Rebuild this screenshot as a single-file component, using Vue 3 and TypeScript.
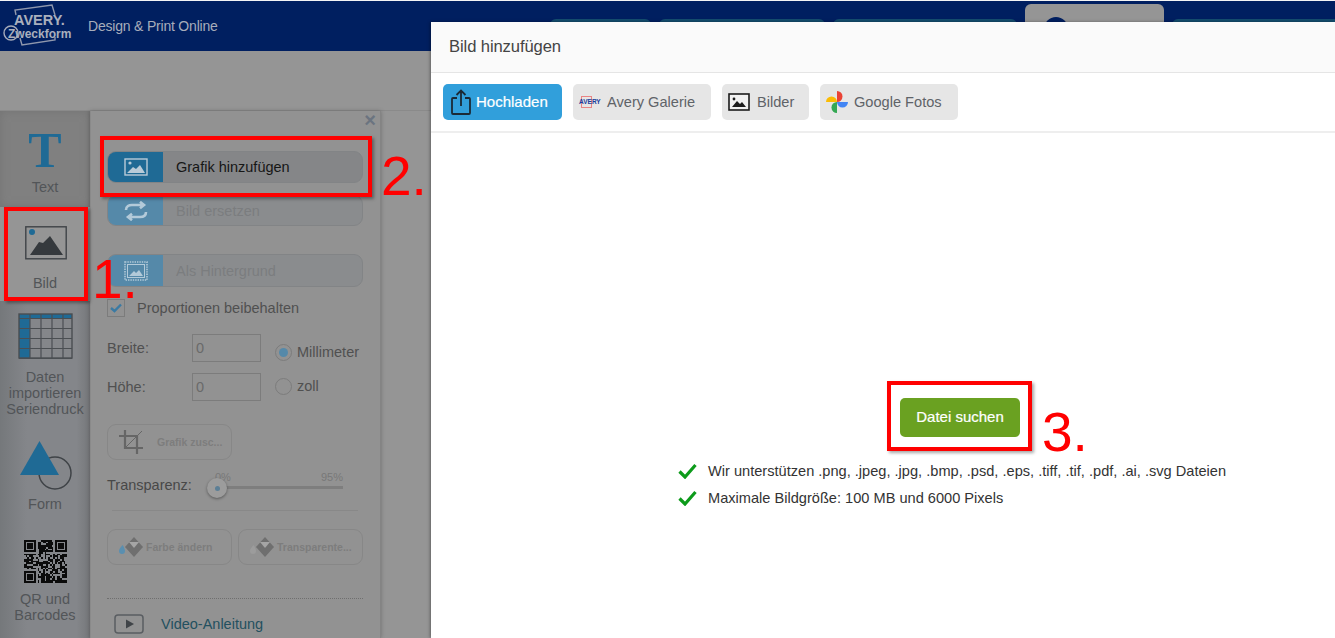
<script setup lang="ts">
const size = 25
const qr: { x: number; y: number }[] = []
function finder(x0: number, y0: number, x: number, y: number): number {
  const dx = x - x0
  const dy = y - y0
  if (dx < -1 || dy < -1 || dx > 7 || dy > 7) return -1
  if (dx < 0 || dy < 0 || dx > 6 || dy > 6) return 0
  if (dx === 0 || dy === 0 || dx === 6 || dy === 6) return 1
  if (dx === 1 || dy === 1 || dx === 5 || dy === 5) return 0
  return 1
}
let seed = 77
for (let y = 0; y < size; y++) {
  for (let x = 0; x < size; x++) {
    seed = (seed * 1103 + 12345) % 65536
    const f = Math.max(finder(0, 0, x, y), finder(size - 7, 0, x, y), finder(0, size - 7, x, y))
    if (f === 1 || (f === -1 && (seed >> 6) % 5 < 3)) qr.push({ x, y })
  }
}
const rows = [0, 1, 2, 3, 4]
const cols = [1, 2, 3, 4]
</script>

<template>
  <div class="page">
    <header class="topbar">
      <div class="logo">
        <svg class="logo-frame" width="76" height="50" viewBox="0 0 76 50">
          <path d="M16 15 L15 10 L52 5 L55 15 M20 38 L22 45 L55 40 L55 37" fill="none" stroke="#8f98ad" stroke-width="1.4" />
          <circle cx="11" cy="33" r="7" fill="none" stroke="#a6acba" stroke-width="1.4" />
        </svg>
        <span class="logo-avery">AVERY.</span>
        <span class="logo-zweck">Zweckform</span>
      </div>
      <span class="brand-text">Design &amp; Print Online</span>
      <nav class="top-tabs">
        <span class="tab t1"></span>
        <span class="tab t2"></span>
        <span class="tab t3"></span>
        <span class="tab active"><i class="user-dot"></i></span>
        <span class="tab t5"></span>
      </nav>
    </header>
    <div class="toolbar"></div>
    <div class="workspace">
      <aside class="sidebar">
        <div class="side-item first">
          <span class="t-glyph">T</span>
          <span class="side-label">Text</span>
        </div>
        <div class="side-item selected">
          <svg width="42" height="34" viewBox="0 0 42 34">
            <rect x="0.8" y="0.8" width="40.4" height="32" fill="none" stroke="#3f4347" stroke-width="1.4" />
            <circle cx="7" cy="6" r="3" fill="#1f6a95" />
            <path d="M5 29 L14 16 L18 17 L25 10 L38 29 Z" fill="#35393d" />
          </svg>
          <span class="side-label">Bild</span>
        </div>
        <div class="side-item table">
          <svg width="55" height="46" viewBox="0 0 55 46">
            <rect x="1" y="1" width="53" height="5" fill="#1f6a95" />
            <rect x="1" y="6" width="11" height="39" fill="#1f6a95" />
            <rect x="1" y="1" width="53" height="44" fill="none" stroke="#4a4e52" stroke-width="1.4" />
            <path v-for="c in cols" :key="'c' + c" :d="`M${1 + c * 11} 1 V45`" stroke="#4a4e52" stroke-width="1.2" />
            <path v-for="r in rows" :key="'r' + r" :d="`M1 ${5.5 + r * 10} H54`" stroke="#4a4e52" stroke-width="1.2" />
          </svg>
          <span class="side-label">Daten importieren Seriendruck</span>
        </div>
        <div class="side-item shape">
          <svg width="52" height="50" viewBox="0 0 52 50">
            <circle cx="35" cy="33" r="16" fill="none" stroke="#3f4347" stroke-width="1.5" />
            <path d="M19.5 1 L39 35 L0 35 Z" fill="#1f6a95" />
          </svg>
          <span class="side-label">Form</span>
        </div>
        <div class="side-item qr">
          <svg width="43" height="43" :viewBox="`0 0 ${size} ${size}`" shape-rendering="crispEdges">
            <rect v-for="(m, i) in qr" :key="i" :x="m.x" :y="m.y" width="1" height="1" fill="#0b0b0b" />
          </svg>
          <span class="side-label">QR und Barcodes</span>
        </div>
      </aside>

      <section class="panel">
        <span class="panel-close">×</span>
        <div class="wide-btn">
          <span class="wide-icon">
            <svg width="24" height="18" viewBox="0 0 24 18">
              <rect x="1" y="1" width="22" height="16" fill="none" stroke="#b9cbd8" stroke-width="1.4" />
              <circle cx="6" cy="5" r="1.6" fill="#b9cbd8" />
              <path d="M3 15 L9 9 L12 11 L16 7 L21 15 Z" fill="#b9cbd8" />
            </svg>
          </span>
          <span class="wide-text">Grafik hinzufügen</span>
        </div>
        <div class="wide-btn off replace">
          <span class="wide-icon">
            <svg width="24" height="20" viewBox="0 0 24 20" fill="none" stroke="#b3cad9" stroke-width="2.6">
              <path d="M2 9 C2 5 5 4 8 4 H19 M16 0.8 L20 4 L16 7.2" />
              <path d="M22 11 C22 15 19 16 16 16 H5 M8 12.8 L4 16 L8 19.2" />
            </svg>
          </span>
          <span class="wide-text">Bild ersetzen</span>
        </div>
        <div class="wide-btn off background">
          <span class="wide-icon">
            <svg width="24" height="20" viewBox="0 0 24 20">
              <rect x="1" y="1" width="22" height="18" fill="none" stroke="#b3cad9" stroke-width="1.6" stroke-dasharray="1.4 1" />
              <rect x="3.5" y="3.5" width="17" height="13" fill="none" stroke="#b3cad9" />
              <path d="M5 15 L10 10 L12 12 L15 9 L19 15 Z" fill="#b3cad9" />
            </svg>
          </span>
          <span class="wide-text">Als Hintergrund</span>
        </div>

        <label class="check-row">
          <span class="check-box">
            <svg width="12" height="10" viewBox="0 0 12 10"><path d="M1 5 L4.5 8 L11 1.5" fill="none" stroke="#3a7aa3" stroke-width="2.4" /></svg>
          </span>
          Proportionen beibehalten
        </label>

        <div class="field-row first-field">
          <span class="field-label">Breite:</span>
          <span class="field-input">0</span>
          <span class="radio on"><i></i></span>
          <span class="radio-label">Millimeter</span>
        </div>
        <div class="field-row second-field">
          <span class="field-label">Höhe:</span>
          <span class="field-input">0</span>
          <span class="radio"></span>
          <span class="radio-label">zoll</span>
        </div>

        <div class="ghost-btn crop">
          <svg width="24" height="24" viewBox="0 0 24 24" fill="none" stroke="#666" stroke-width="2.2">
            <path d="M6 0 V18 H24 M0 6 H18 V24" />
            <path d="M6 18 L23 1" stroke-width="1" />
          </svg>
          <span>Grafik zusc...</span>
        </div>

        <div class="slider-row">
          <span class="slider-label">Transparenz:</span>
          <div class="slider">
            <div class="slider-scale"><span>0%</span><span>95%</span></div>
            <div class="slider-track"></div>
            <div class="slider-thumb"><i></i></div>
          </div>
        </div>
        <div class="rule"></div>

        <div class="ghost-pair">
          <div class="ghost-btn">
            <svg width="24" height="22" viewBox="0 0 24 22">
              <path d="M3.5 9 C1 12 0 13.5 0 15 A3 3 0 0 0 6 15 C6 13.5 5 11 3.5 9 Z" fill="#5a8fb0" />
              <path d="M15 1 L24 11 L15 21 L6 11 Z" fill="#6f6f6f" />
              <path d="M10 6 H20 L15 12 Z" fill="#a5a5a5" />
            </svg>
            <span>Farbe ändern</span>
          </div>
          <div class="ghost-btn">
            <svg width="24" height="22" viewBox="0 0 24 22">
              <path d="M3.5 9 C1 12 0 13.5 0 15 A3 3 0 0 0 6 15 C6 13.5 5 11 3.5 9 Z" fill="#9c9c9c" />
              <path d="M15 1 L24 11 L15 21 L6 11 Z" fill="#6f6f6f" />
              <path d="M10 6 H20 L15 12 Z" fill="#a5a5a5" />
            </svg>
            <span>Transparente...</span>
          </div>
        </div>

        <div class="dotted"></div>
        <div class="video-row">
          <svg width="30" height="20" viewBox="0 0 30 20">
            <rect x="1" y="1" width="28" height="18" rx="3" fill="none" stroke="#5a5e62" stroke-width="1.5" />
            <path d="M12 5.5 L20 10 L12 14.5 Z" fill="#404448" />
          </svg>
          <span>Video-Anleitung</span>
        </div>
      </section>
    </div>

    <section class="dialog">
      <div class="dialog-head">Bild hinzufügen</div>
      <div class="source-bar">
        <button class="source active">
          <svg width="20" height="26" viewBox="0 0 20 26" fill="none" stroke="#1b2a36" stroke-width="1.8">
            <path d="M6 9 H2 A1 1 0 0 0 1 10 V24 A1 1 0 0 0 2 25 H18 A1 1 0 0 0 19 24 V10 A1 1 0 0 0 18 9 H14" />
            <path d="M10 17 V2 M5.5 6 L10 1.5 L14.5 6" />
          </svg>
          <span class="lift">Hochladen</span>
        </button>
        <button class="source avery">
          <span class="mini-logo"><i></i><b>AVERY</b></span>
          <span>Avery Galerie</span>
        </button>
        <button class="source bilder">
          <svg width="22" height="18" viewBox="0 0 22 18">
            <rect x="1" y="1" width="20" height="16" fill="#f1f1f1" stroke="#1c1c1c" stroke-width="1.6" />
            <circle cx="6" cy="6" r="1.4" fill="#1c1c1c" />
            <path d="M4 14 L9 8 L12 11 L14 9 L18 14 Z" fill="#1c1c1c" />
          </svg>
          <span>Bilder</span>
        </button>
        <button class="source google">
          <svg width="24" height="24" viewBox="0 0 24 24">
            <path d="M12 1 A5.5 5.5 0 0 1 12 12 Z" fill="#ea4335" />
            <path d="M23 12 A5.5 5.5 0 0 1 12 12 Z" fill="#4285f4" />
            <path d="M12 23 A5.5 5.5 0 0 1 12 12 Z" fill="#34a853" />
            <path d="M1 12 A5.5 5.5 0 0 1 12 12 Z" fill="#fbbc04" />
          </svg>
          <span>Google Fotos</span>
        </button>
      </div>
      <div class="upload-body">
        <button class="browse">Datei suchen</button>
        <ul class="rules">
          <li>
            <svg width="19" height="16" viewBox="0 0 19 16"><path d="M1.5 8.5 L7 14 L17.5 2" fill="none" stroke="#0d9b1b" stroke-width="3.2" /></svg>
            Wir unterstützen .png, .jpeg, .jpg, .bmp, .psd, .eps, .tiff, .tif, .pdf, .ai, .svg Dateien
          </li>
          <li>
            <svg width="19" height="16" viewBox="0 0 19 16"><path d="M1.5 8.5 L7 14 L17.5 2" fill="none" stroke="#0d9b1b" stroke-width="3.2" /></svg>
            Maximale Bildgröße: 100 MB und 6000 Pixels
          </li>
        </ul>
      </div>
    </section>

    <div class="mark box1"></div>
    <div class="mark box2"></div>
    <div class="mark box3"></div>
    <span class="num n1">1.</span>
    <span class="num n2">2.</span>
    <span class="num n3">3.</span>
  </div>
</template>

<style scoped>
.page {
  position: relative;
  width: 1335px;
  height: 638px;
  overflow: hidden;
  background: #959595;
  font-family: "Liberation Sans", Arial, sans-serif;
  color: #555;
  border-top: 1px solid #f4f4f4;
  box-sizing: border-box;
}
.topbar {
  display: flex;
  align-items: flex-start;
  height: 50px;
  background: #001f60;
  position: relative;
}
.logo {
  position: relative;
  width: 72px;
  height: 50px;
  margin-left: 3px;
  flex: none;
}
.logo-frame { position: absolute; left: -3px; top: -1px; }
.logo-avery {
  position: absolute;
  left: 11px;
  top: 11px;
  font: bold 14.5px/16px "Liberation Sans", sans-serif;
  color: #a9afbd;
}
.logo-zweck {
  position: absolute;
  left: 5px;
  top: 26px;
  font: bold 12px/14px "Liberation Sans", sans-serif;
  color: #a9afbd;
}
.brand-text {
  margin-left: 13px;
  margin-top: 17px;
  font-size: 14px;
  letter-spacing: -0.2px;
  color: #a7adbb;
}
.top-tabs {
  position: absolute;
  left: 550px;
  right: 0;
  top: 0;
  display: flex;
  gap: 8px;
  align-items: flex-end;
  height: 50px;
}
.tab {
  height: 32px;
  border-radius: 6px 6px 0 0;
  background: #144d6e;
  flex: none;
}
.t1 { width: 101px; }
.t2 { width: 166px; }
.t3 { width: 184px; }
.t5 { width: 170px; }
.tab.active {
  width: 139px;
  height: 47px;
  background: #959595;
  position: relative;
}
.user-dot {
  position: absolute;
  left: 19px;
  top: 13px;
  width: 24px;
  height: 24px;
  border-radius: 50%;
  background: #001f60;
}
.toolbar {
  height: 60px;
  background: #959595;
  border-bottom: 1px solid #8a8a8a;
  box-sizing: border-box;
}
.workspace {
  display: flex;
  height: 527px;
}
.sidebar {
  width: 90px;
  flex: none;
  background: linear-gradient(90deg, #75787b, #84868a 30%, #84868a 85%, #75777a);
  display: flex;
  flex-direction: column;
  text-align: center;
}
.side-item {
  display: flex;
  flex-direction: column;
  align-items: center;
  flex: none;
}
.side-label {
  font-size: 14.5px;
  line-height: 16px;
  color: #525558;
}
.first {
  height: 96px;
  background: #808080;
  box-shadow: inset 0 0 10px #747474;
}
.t-glyph {
  font: bold 50px/50px "Liberation Serif", serif;
  color: #1f6a95;
  margin-top: 14px;
  margin-bottom: 4px;
}
.selected {
  height: 94px;
  padding-top: 19px;
  box-sizing: border-box;
  background: #959595;
}
.selected svg { margin-left: 2px; }
.selected .side-label { margin-top: 15px; }
.table { height: 135px; padding-top: 12px; box-sizing: border-box; }
.table .side-label { margin-top: 10px; width: 84px; }
.shape { height: 100px; padding-top: 4px; box-sizing: border-box; }
.shape svg { margin-left: 2px; }
.shape .side-label { margin-top: 6px; }
.qr { margin-top: 4px; }
.qr .side-label { margin-top: 8px; width: 76px; }

.panel {
  position: relative;
  width: 291px;
  flex: none;
  box-sizing: border-box;
  padding: 40px 17px 0 16px;
  background: #929292;
  border-left: 1px solid #8a8a8a;
  border-right: 1px solid #848484;
  box-shadow: 0 0 4px rgba(0, 0, 0, 0.25);
}
.panel-close {
  position: absolute;
  right: 4px;
  top: 1px;
  font: bold 20px/16px "Liberation Sans", sans-serif;
  color: #6b7480;
}
.wide-btn {
  display: flex;
  align-items: center;
  width: 256px;
  height: 32px;
  border: 1px solid #828486;
  border-radius: 9px;
  background: #858688;
  overflow: hidden;
  box-sizing: border-box;
}
.wide-icon {
  display: flex;
  align-items: center;
  justify-content: center;
  width: 55px;
  height: 100%;
  background: #1f6a95;
  flex: none;
}
.wide-text {
  margin-left: 13px;
  font-size: 14.5px;
  color: #161616;
}
.wide-btn.off { background: #8a8c8e; }
.wide-btn.off .wide-icon { background: #5589a9; }
.wide-btn.off .wide-text { color: #7b7d7f; }
.replace { margin-top: 12px; height: 31px; }
.background { margin-top: 28px; height: 33px; }
.check-row {
  display: flex;
  align-items: center;
  margin-top: 12px;
  font-size: 14.5px;
  color: #505050;
  height: 18px;
}
.check-box {
  display: flex;
  align-items: center;
  justify-content: center;
  width: 18px;
  height: 18px;
  border: 1px solid #7c7c7c;
  box-sizing: border-box;
  margin-right: 12px;
}
.field-row {
  display: flex;
  align-items: center;
  font-size: 14.5px;
  color: #505050;
}
.first-field { margin-top: 17px; }
.second-field { margin-top: 11px; }
.field-label { width: 85px; flex: none; }
.field-input {
  width: 69px;
  height: 28px;
  border: 1px solid #7c7c7c;
  box-sizing: border-box;
  line-height: 26px;
  padding-left: 3px;
  color: #6a6a6a;
  margin-right: 14px;
  flex: none;
}
.radio {
  width: 17px;
  height: 17px;
  border: 1px solid #7c7c7c;
  border-radius: 50%;
  box-sizing: border-box;
  margin-right: 5px;
  display: flex;
  align-items: center;
  justify-content: center;
  flex: none;
}
.radio i {
  width: 9px;
  height: 9px;
  border-radius: 50%;
  background: #5589a9;
}
.radio, .radio-label { position: relative; }
.first-field .radio, .first-field .radio-label { top: 4px; }
.second-field .radio, .second-field .radio-label { top: -1px; }
.ghost-btn {
  display: flex;
  align-items: center;
  gap: 3px;
  width: 125px;
  height: 36px;
  border: 1px solid #878787;
  border-radius: 9px;
  box-sizing: border-box;
  padding-left: 11px;
  font-size: 10.5px;
  font-weight: bold;
  color: #7d7d7d;
  white-space: nowrap;
  overflow: hidden;
}
.crop { margin-top: 23px; }
.crop span { margin-left: 11px; }
.slider-row {
  display: flex;
  align-items: center;
  margin-top: 9px;
  height: 32px;
  font-size: 14.5px;
  color: #484848;
}
.slider-label { width: 100px; flex: none; }
.slider { position: relative; width: 136px; height: 32px; }
.slider-scale {
  display: flex;
  justify-content: space-between;
  padding-left: 8px;
  padding-top: 2px;
  font-size: 11px;
  line-height: 13px;
  color: #787878;
}
.slider-track {
  position: absolute;
  left: 6px;
  right: 0;
  top: 17px;
  height: 3px;
  background: #7e7e7e;
}
.slider-thumb {
  position: absolute;
  left: 0;
  top: 9px;
  width: 20px;
  height: 20px;
  border-radius: 50%;
  background: #9c9c9c;
  box-shadow: 0 1px 3px rgba(0, 0, 0, 0.4);
  display: flex;
  align-items: center;
  justify-content: center;
}
.slider-thumb i {
  width: 5px;
  height: 5px;
  border-radius: 50%;
  background: #5c7f96;
}
.rule {
  margin: 9px 5px 0;
  height: 1px;
  background: #888;
}
.ghost-pair {
  display: flex;
  gap: 6px;
  margin-top: 18px;
}
.dotted {
  margin-top: 33px;
  border-top: 1px dotted #6f6f6f;
}
.video-row {
  display: flex;
  align-items: center;
  gap: 17px;
  margin-top: 15px;
  padding-left: 7px;
  font-size: 14.5px;
  color: #23505f;
}

.dialog {
  position: absolute;
  left: 431px;
  top: 21px;
  width: 904px;
  height: 616px;
  background: #fff;
  display: flex;
  flex-direction: column;
  box-shadow: -1px 0 3px rgba(0, 0, 0, 0.35);
}
.dialog-head {
  height: 50px;
  line-height: 49px;
  padding-left: 18px;
  font-size: 16.6px;
  letter-spacing: -0.1px;
  color: #444;
  background: #fafafa;
  border-bottom: 1px solid #e5e5e5;
  flex: none;
}
.source-bar {
  display: flex;
  align-items: flex-start;
  gap: 11px;
  height: 60px;
  padding: 11px 0 0 12px;
  box-sizing: border-box;
  border-bottom: 2px solid #eee;
  flex: none;
}
.source {
  display: flex;
  align-items: center;
  height: 36px;
  padding: 0;
  border: 0;
  border-radius: 5px;
  background: #e6e6e6;
  color: #5f6368;
  font: 14.6px "Liberation Sans", sans-serif;
  box-sizing: border-box;
}
.source.active {
  width: 119px;
  background: #319fdb;
  color: #fff;
  font-size: 15px;
  -webkit-text-stroke: 0.2px #fff;
  padding-left: 8px;
  gap: 5px;
}
.lift { margin-bottom: 2px; }
.avery { width: 138px; padding-left: 6px; gap: 5px; }
.bilder { width: 87px; padding-left: 6px; gap: 7px; }
.google { width: 138px; padding-left: 5px; gap: 5px; }
.mini-logo {
  position: relative;
  width: 23px;
  height: 12px;
  display: block;
}
.mini-logo i {
  position: absolute;
  left: 2px;
  top: 0;
  width: 11px;
  height: 12px;
  border: 1px solid #e98484;
  box-sizing: border-box;
}
.mini-logo b {
  position: absolute;
  left: 0;
  top: 2px;
  font: bold 6.5px/8px "Liberation Sans", sans-serif;
  color: #1a3d9c;
}
.upload-body {
  flex: 1;
  padding-top: 265px;
  padding-left: 247px;
}
.browse {
  display: block;
  width: 120px;
  height: 39px;
  margin-left: 222px;
  border: 0;
  border-radius: 5px;
  background: #6aa121;
  color: #fff;
  font: 15px "Liberation Sans", sans-serif;
  -webkit-text-stroke: 0.2px #fff;
  padding: 0 0 2px;
}
.rules {
  list-style: none;
  margin: 20px 0 0;
  padding: 0;
  font-size: 14.6px;
  color: #333;
}
.rules li {
  display: flex;
  align-items: center;
  gap: 11px;
  height: 27px;
  white-space: nowrap;
}
.mark {
  position: absolute;
  border: 4px solid #f00;
  box-sizing: border-box;
  box-shadow: 2px 2px 3px rgba(0, 0, 0, 0.35);
}
.box1 { left: 4px; top: 206px; width: 84px; height: 94px; }
.box2 { left: 100px; top: 135px; width: 272px; height: 61px; }
.box3 { left: 887px; top: 380px; width: 145px; height: 70px; }
.num {
  position: absolute;
  font: 55px/55px "Liberation Sans", sans-serif;
  color: #f00;
}
.n1 { left: 92px; top: 251px; }
.n2 { left: 381px; top: 148px; }
.n3 { left: 1042px; top: 404px; }
</style>
